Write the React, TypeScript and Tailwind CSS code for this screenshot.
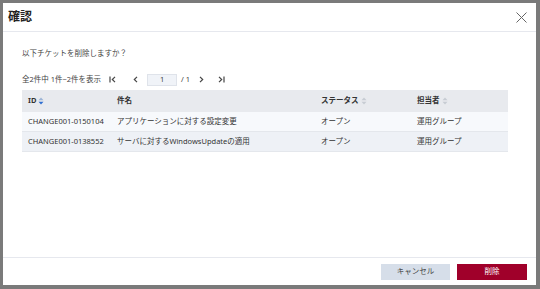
import React from "react";

const Sort = ({ active }: { active?: boolean }) => (
  <svg width="6" height="8" viewBox="0 0 6 8" className="ml-[2px] inline-block">
    <path d="M3 0.5 L5.5 3.3 H0.5 Z" fill={active ? "#9db4d6" : "#c7ccd3"} />
    <path d="M3 7.5 L5.5 4.7 H0.5 Z" fill={active ? "#2f6fd1" : "#c7ccd3"} />
  </svg>
);

const First = () => (
  <svg width="7" height="7" viewBox="0 0 7 7">
    <path d="M1 0.5 V6.5 M6 0.8 L3.3 3.5 L6 6.2" stroke="#444" strokeWidth="1.2" fill="none" />
  </svg>
);
const Prev = () => (
  <svg width="5" height="7" viewBox="0 0 5 7">
    <path d="M4 0.8 L1.3 3.5 L4 6.2" stroke="#444" strokeWidth="1.2" fill="none" />
  </svg>
);
const Next = () => (
  <svg width="5" height="7" viewBox="0 0 5 7">
    <path d="M1 0.8 L3.7 3.5 L1 6.2" stroke="#444" strokeWidth="1.2" fill="none" />
  </svg>
);
const Last = () => (
  <svg width="7" height="7" viewBox="0 0 7 7">
    <path d="M6 0.5 V6.5 M1 0.8 L3.7 3.5 L1 6.2" stroke="#444" strokeWidth="1.2" fill="none" />
  </svg>
);

export default function App() {
  const font = { fontFamily: '"Noto Sans", "Noto Sans CJK JP", sans-serif' };
  return (
    <div className="w-[540px] h-[289px] bg-[#7a7a7a] p-[3px] pr-[4px] pb-[4px]" style={font}>
      <div className="w-full h-full bg-white flex flex-col text-[#333]">
        <div className="h-[29px] flex items-center justify-between pl-[5px] pr-[9px] border-b border-[#e6e8ee]">
          <span className="text-[12px] font-bold text-[#222] leading-none">確認</span>
          <svg width="11" height="11" viewBox="0 0 11 11">
            <path d="M0.5 0.5 L10.5 10.5 M10.5 0.5 L0.5 10.5" stroke="#666" strokeWidth="1" />
          </svg>
        </div>
        <div className="flex-1 px-[19px] pt-[16px]">
          <div className="text-[7.5px] leading-[10px] text-[#444]">以下チケットを削除しますか？</div>
          <div className="mt-[15px] flex items-center h-[13px] text-[7.5px] text-[#444]">
            <span>全2件中 1件~2件を表示</span>
            <span className="ml-[8px] flex"><First /></span>
            <span className="ml-[17px] flex"><Prev /></span>
            <div className="ml-[9px] w-[30px] h-[12px] bg-[#f0f3f8] border border-[#dfe3ea] flex items-center justify-center">1</div>
            <span className="ml-[4px]">/ 1</span>
            <span className="ml-[9px] flex"><Next /></span>
            <span className="ml-[14px] flex"><Last /></span>
          </div>
          <div className="mt-[4px] w-[486px] text-[7.5px] text-[#333]">
            <div className="flex h-[22px] items-center bg-[#e8eaee] font-bold text-[#333]">
              <div className="w-[95px] pl-[6px] flex items-center">ID<Sort active /></div>
              <div className="w-[204px] pl-[0px]">件名</div>
              <div className="w-[96px] flex items-center">ステータス<Sort /></div>
              <div className="flex-1 flex items-center">担当者<Sort /></div>
            </div>
            <div className="flex h-[20px] items-center bg-[#f7f9fc] border-b border-[#e4e7ec]">
              <div className="w-[95px] pl-[6px]">CHANGE001-0150104</div>
              <div className="w-[204px]">アプリケーションに対する設定変更</div>
              <div className="w-[96px]">オープン</div>
              <div className="flex-1">運用グループ</div>
            </div>
            <div className="flex h-[20px] items-center bg-[#eef1f6] border-b border-[#e4e7ec]">
              <div className="w-[95px] pl-[6px]">CHANGE001-0138552</div>
              <div className="w-[204px]">サーバに対するWindowsUpdateの適用</div>
              <div className="w-[96px]">オープン</div>
              <div className="flex-1">運用グループ</div>
            </div>
          </div>
        </div>
        <div className="h-[28px] border-t border-[#e6e8ee] flex items-center justify-end gap-[7px] pr-[9px]">
          <button className="w-[69px] h-[16px] bg-[#d6dee9] text-[7.5px] text-[#444]">キャンセル</button>
          <button className="w-[70px] h-[16px] bg-[#a0002a] text-[7.5px] text-white">削除</button>
        </div>
      </div>
    </div>
  );
}
